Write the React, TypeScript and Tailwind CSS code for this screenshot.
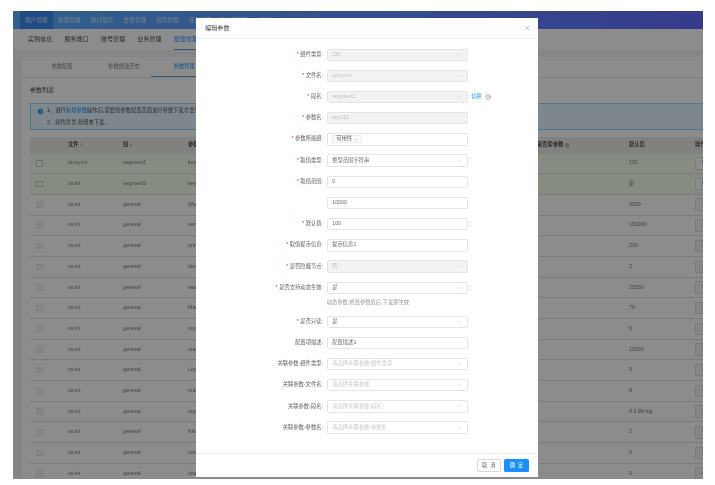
import { ChevronDown, ChevronsUpDown, CircleHelp, Info, X } from "lucide-react";

const nav = ["租户管理", "资源管理", "统计监控", "告警管理", "权限管理", "任务管理", "版本库管理", "系统"];
const sub = ["实例信息", "服务端口", "账号管理", "业务管理", "配置管理"];
const rows = [
  ["proxy.ini", "segment1", "key112", "100"],
  ["os.ini", "segment2", "key113", "是"],
  ["os.ini", "general", "WaitTimeout", "5000"],
  ["os.ini", "general", "server_id", "150000"],
  ["os.ini", "general", "print_log", "200"],
  ["os.ini", "general", "decimal", "2"],
  ["os.ini", "general", "wait_timeout", "25200"],
  ["os.ini", "general", "MaxConn", "70"],
  ["os.ini", "general", "mysql_max", "6"],
  ["os.ini", "general", "max_size", "10000"],
  ["os.ini", "general", "LogLevel", "3"],
  ["os.ini", "general", "max_pool", "8"],
  ["os.ini", "general", "mysql_version", "8.9.99-log"],
  ["os.ini", "general", "link_max", "2"],
  ["os.ini", "general", "conn_time", "0"],
  ["os.ini", "general", "check_time", "0"],
];

type Field = {
  label: string;
  req?: boolean;
  kind: "select" | "input" | "tag";
  value?: string;
  disabled?: boolean;
  placeholder?: boolean;
  extra?: boolean;
  help?: string;
};

const fields: Field[] = [
  { label: "组件类型:", req: true, kind: "select", value: "CN", disabled: true },
  { label: "文件名:", req: true, kind: "select", value: "proxy.ini", disabled: true },
  { label: "段名:", req: true, kind: "select", value: "segment1", disabled: true, extra: true },
  { label: "参数名:", req: true, kind: "input", value: "key112", disabled: true },
  { label: "参数所属组:", req: true, kind: "tag", value: "可用性" },
  { label: "取值类型:", req: true, kind: "select", value: "整型范围字符串" },
  { label: "取值范围:", req: true, kind: "input", value: "0" },
  { label: "", kind: "input", value: "10000" },
  { label: "默认值:", req: true, kind: "input", value: "100" },
  { label: "取值提示信息:", req: true, kind: "input", value: "提示信息1" },
  { label: "是否隐藏节点:", req: true, kind: "select", value: "否", disabled: true },
  { label: "是否支持动态生效:", req: true, kind: "select", value: "是", help: "动态参数,修改参数值后,下发即生效" },
  { label: "是否只读:", req: true, kind: "select", value: "是" },
  { label: "配置项描述:", kind: "input", value: "配置描述1" },
  { label: "关联参数-组件类型:", kind: "select", value: "请选择关联参数-组件类型", placeholder: true },
  { label: "关联参数-文件名:", kind: "select", value: "请选择关联参数", placeholder: true },
  { label: "关联参数-段名:", kind: "select", value: "请选择关联参数-段名", placeholder: true },
  { label: "关联参数-参数名:", kind: "select", value: "请选择关联参数-参数名", placeholder: true },
];

function FormRow({ f }: { f: Field }) {
  const box = `flex h-[12.4px] w-[141px] items-center rounded-[1.5px] border-[0.5px] border-[#e4e4e4] px-[4.5px] ${
    f.disabled ? "bg-[#f3f3f3] text-[#bdbdbd]" : "bg-white text-[#6a6a6a]"
  }`;
  return (
    <div className="flex items-start">
      <div className="flex h-[12.4px] w-[127px] items-center justify-end text-[5.3px] text-[#5c5c5c]">
        {f.req && <span className="mr-[1.5px] text-[#f5222d]">*</span>}
        {f.label}
      </div>
      <div className="ml-[3.7px] flex flex-col">
        <div className="flex items-center">
          <div className={box}>
            {f.kind === "tag" ? (
              <span className="flex h-[8px] items-center gap-[2px] rounded-[1px] border-[0.5px] border-[#eaeaea] bg-[#fafafa] px-[3px] text-[#5c5c5c]">
                {f.value}
                <X size={3.5} className="text-[#999]" />
              </span>
            ) : (
              <span className={f.placeholder ? "text-[#c8c8c8]" : ""}>{f.value}</span>
            )}
            {f.kind === "select" && <ChevronDown size={6} className="ml-auto text-[#c4c4c4]" />}
          </div>
          {f.extra && (
            <span className="ml-[3.5px] flex items-center gap-[3px] text-[#1890ff]">
              切换 <CircleHelp size={6} className="text-[#777]" />
            </span>
          )}
        </div>
        {f.help && <div className="mt-[3.6px] h-[9.2px] leading-[9px] text-[#999]">{f.help}</div>}
      </div>
    </div>
  );
}

const cols = "grid grid-cols-[38px_55px_65px_349px_92px_66px_40px] items-center";

export default function App() {
  return (
    <div className="h-[485px] w-[715px] overflow-hidden bg-white pb-[6px] pl-[13px] pr-[12px] pt-[11px] font-['Liberation_Sans','Noto_Sans_CJK_SC',sans-serif] text-[5.3px] blur-[0.5px]">
      <div className="relative h-[468px] w-[690px] overflow-hidden bg-[#f0f2f5]">
        <div className="flex h-[18px] bg-gradient-to-r from-[#58b0ff] to-[#636cff] pl-[7px] text-[5.6px] text-white/75">
          {nav.map((n, i) => (
            <div key={n} className={`flex w-[32.8px] items-center justify-center ${i === 0 ? "bg-[#3f87f0]" : ""}`}>
              {n}
            </div>
          ))}
        </div>
        <div className="flex h-[21px] items-center bg-white pl-[15px] text-[6px] text-[#555]">
          {sub.map((n, i) => (
            <div
              key={n}
              className={`mr-[12.5px] flex h-full items-center ${i === 4 ? "border-b border-[#5a9be8] text-[#1890ff]" : ""}`}
            >
              {n}
            </div>
          ))}
        </div>
        <div className="ml-[9px] mt-[7px] h-[450px] bg-white">
          <div className="flex h-[21px] items-stretch border-b-[0.5px] border-[#e8e8e8] text-[#808080]">
            <div className="flex w-[66px] items-center justify-center pl-[14px]">参数配置</div>
            <div className="flex w-[66px] items-center justify-center pl-[6px]">参数修改历史</div>
            <div className="ml-[-3px] flex w-[66px] items-center justify-center border-b border-[#5a9be8] text-[#1890ff]">
              参数管理
            </div>
          </div>
          <div className="pl-[8px]">
            <div className="flex h-[25px] items-center text-[6px] text-[#444]">参数列表</div>
            <div className="flex h-[26.5px] w-[680px] gap-[3px] border-[0.5px] border-[#91d5ff] bg-[#e6f7ff] py-[3px] pl-[6px] text-[#555]">
              <Info size={7} className="mt-[0.5px] fill-[#1890ff] text-white" />
              <div className="flex flex-col gap-[4.5px] leading-[7px]">
                <span>
                  1、进行<span className="text-[#1890ff]">新增参数</span>操作后,需要到参数配置页面进行参数下发才会生效
                </span>
                <span>2、绿色背景:新增未下发。</span>
              </div>
            </div>
            <div className="mt-[7.5px] w-[680px]">
              <div className={`${cols} h-[16.5px] bg-[#ececec] font-medium text-[#333]`}>
                <div />
                <div className="flex items-center gap-[1px]">文件<ChevronsUpDown size={4} /></div>
                <div className="flex items-center gap-[1px]">组<ChevronsUpDown size={4} /></div>
                <div>参数名</div>
                <div className="flex items-center gap-[1px]">是否索参数<CircleHelp size={4.5} /></div>
                <div>默认值</div>
                <div>操作</div>
              </div>
              {rows.map((r, i) => (
                <div
                  key={i}
                  className={`${cols} h-[20.7px] border-b-[0.5px] border-[#e0e0e0] text-[#777] ${i < 2 ? "bg-[#f6ffed]" : "bg-white"}`}
                >
                  <div className="pl-[6px]">
                    <div className={`h-[6.5px] w-[6.5px] border-[0.5px] ${i < 2 ? "border-[#c8c8c8] bg-[#fbfff7]" : "border-[#e4e4e4] bg-[#f5f5f5]"}`} />
                  </div>
                  <div>{r[0]}</div>
                  <div>{r[1]}</div>
                  <div>{r[2]}</div>
                  <div />
                  <div>{r[3]}</div>
                  <div>
                    <div
                      className={`flex h-[12.5px] w-[24px] items-center justify-center rounded-[1px] border-[0.5px] ${
                        i < 2 ? "border-[#ddd] bg-white text-[#1890ff]" : "border-[#ddd] bg-[#f5f5f5] text-[#bbb]"
                      }`}
                    >
                      编辑
                    </div>
                  </div>
                </div>
              ))}
            </div>
          </div>
        </div>

        <div className="absolute inset-0 bg-black/45" />

        <div className="absolute left-[183px] top-[7px] flex h-[459px] w-[342px] flex-col bg-white">
          <div className="flex h-[21px] items-center justify-between border-b-[0.5px] border-[#eee] pl-[9px] pr-[8px] text-[6.2px] text-[#444]">
            <span>编辑参数</span>
            <X size={6.5} className="text-[#888]" />
          </div>
          <div className="flex flex-1 flex-col gap-[8.8px] pt-[9.5px]">
            {fields.map((f, i) => (
              <FormRow key={i} f={f} />
            ))}
          </div>
          <div className="flex h-[24px] items-center justify-end gap-[3px] border-t-[0.5px] border-[#eee] pr-[9px]">
            <div className="flex h-[12.5px] w-[24.5px] items-center justify-center gap-[3px] rounded-[1.5px] border-[0.5px] border-[#d9d9d9] text-[#666]">
              <span>取</span><span>消</span>
            </div>
            <div className="flex h-[12.5px] w-[25px] items-center justify-center gap-[3px] rounded-[1.5px] bg-[#1890ff] text-white">
              <span>确</span><span>定</span>
            </div>
          </div>
        </div>
      </div>
    </div>
  );
}
